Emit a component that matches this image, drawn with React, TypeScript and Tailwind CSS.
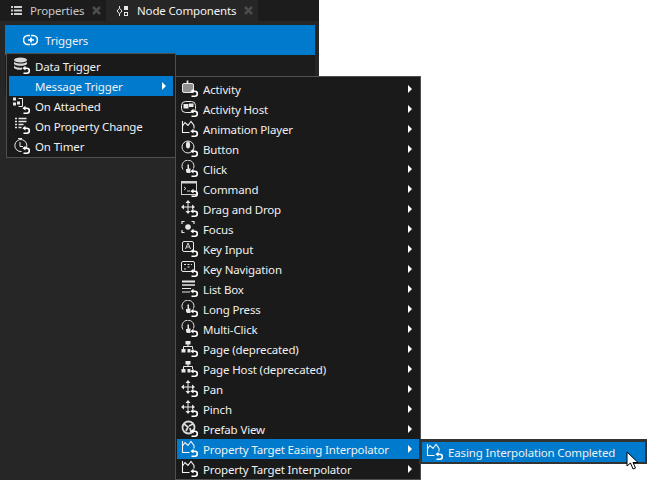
import React from 'react';

// every trigger icon has the same little return arrow in its lower right corner
const Arrow = () => (
  <g>
    <path d="M11.500 11.200h2.300a2.500 2.500 0 0 1 0 5h-3.300" fill="none" stroke="#fff" strokeWidth={1.600} />
    <path d="M12.500 8.800v4.800L9.400 11.200z" fill="#fff" />
  </g>
);

const glyphs: Record<string, React.ReactNode> = {
  data: (
    <g fill="#d8d8d8">
      <ellipse cx="7.500" cy="3" rx="6.500" ry="2.500" />
      <path d="M1 4.800c1 2.400 12 2.400 13 0v2.200c-1 2.400-12 2.400-13 0z" />
      <path d="M1 8.600c1 2.200 7 2.600 8 1.800v2.200c-2 .6-7 .2-8-1.800z" />
    </g>
  ),
  attached: (
    <g fill="none" stroke="#e8e8e8">
      <path d="M5.500 1.500h4v8h-4" />
      <rect x="0.500" y="1" width="2" height="2" fill="#e8e8e8" />
      <rect x="0.500" y="6" width="2" height="2" fill="#e8e8e8" />
      <rect x="4.500" y="5" width="2" height="2" fill="#e8e8e8" />
    </g>
  ),
  property: (
    <g stroke="#e8e8e8" strokeWidth={1.400} fill="none">
      <path d="M2 1.500h2M5.500 1.500h8M2 4.500h2M5.500 4.500h8M2 7.500h2M5.500 7.500h5M2 10.500h2M5.500 10.500h3" />
    </g>
  ),
  timer: (
    <g fill="none" stroke="#e8e8e8">
      <path d="M8.500 14.500a6 6 0 1 1 4.800-3.500" />
      <path d="M7 5v4.500h3M5 1.500h4M7 1.500v1.500" />
    </g>
  ),
  activity: (
    <g fill="none" stroke="#e8e8e8">
      <rect x="1.500" y="3.500" width="11" height="9" rx="1.500" fill="#8f8f8f" />
      <path d="M6.500 0.500v3" strokeWidth={1.800} />
    </g>
  ),
  host: (
    <g fill="none" stroke="#e8e8e8">
      <rect x="0.500" y="1.500" width="14" height="11" rx="4" />
      <rect x="3" y="4.500" width="4" height="3.500" fill="#e8e8e8" />
      <rect x="8.500" y="4" width="3.500" height="2.500" fill="#e8e8e8" />
    </g>
  ),
  animation: (
    <g fill="none" stroke="#f4f4f4" strokeWidth={1.100}>
      <path d="M1.500 1v11.500h7" />
      <path d="M1.500 6L4 2.500l3 3L10 1.500l3 4v3" />
    </g>
  ),
  button: (
    <g fill="none" stroke="#e8e8e8">
      <circle cx="7" cy="7" r="6" />
      <rect x="5.500" y="2" width="3" height="6" rx="1.500" fill="#e8e8e8" />
    </g>
  ),
  click: (
    <g fill="none" stroke="#e8e8e8">
      <path d="M2 9.500A6 6 0 1 1 12.500 8.500" />
      <path d="M5 9v2.500l1 1.500h3.500V8.500H8V4.500H6.500V9z" fill="#e8e8e8" stroke="none" />
    </g>
  ),
  command: (
    <g fill="none" stroke="#d0d0d0">
      <rect x="0.500" y="1.500" width="15" height="13" fill="#141414" />
      <path d="M0.500 2.500h15" strokeWidth={2} />
      <path d="M3 7l2 1.500L3 10M6 11h3" />
    </g>
  ),
  move: (
    <g fill="none" stroke="#e8e8e8">
      <path d="M7 1v12M1 7h12" />
      <path d="M7 0L4.500 3h5zM7 14l-2.500-3h5zM0 7l3-2.500v5zM14 7l-3-2.500v5z" fill="#e8e8e8" stroke="none" />
    </g>
  ),
  focus: (
    <g fill="none" stroke="#e8e8e8">
      <path d="M1 4V1.500h2.500M10.500 1.500H13V4M1 10v2.500h2.500" strokeWidth={1.200} />
      <circle cx="7" cy="7" r="2.800" fill="#e8e8e8" stroke="none" />
    </g>
  ),
  key: (
    <g fill="none" stroke="#e8e8e8">
      <rect x="1.500" y="1.500" width="11" height="10" rx="1.500" />
      <path d="M4.500 9l2.500-6 2.500 6M5.500 7h3" strokeWidth={0.900} />
    </g>
  ),
  nav: (
    <g fill="none" stroke="#e8e8e8">
      <rect x="0.500" y="1.500" width="13" height="10" rx="1.500" />
      <path d="M3 4.500h2M6.500 4.500h2M10 4.500h1M6.500 7h2M3 9h2" strokeWidth={1.200} />
    </g>
  ),
  list: (
    <g stroke="#e8e8e8" fill="none">
      <path d="M1 1.500h13" strokeWidth={2} />
      <path d="M1 5h13" strokeWidth={1.500} />
      <path d="M1 8.500h9M1 12h8" />
    </g>
  ),
  page: (
    <g fill="#e8e8e8" stroke="#e8e8e8">
      <rect x="5" y="1.500" width="4" height="2.500" />
      <path d="M7 4v3M2.500 9.500V6.500h9V9" fill="none" />
      <rect x="1" y="9.500" width="3" height="2.500" />
      <rect x="7" y="9.500" width="2" height="2.500" />
    </g>
  ),
  prefab: (
    <g fill="none" stroke="#d8d8d8" strokeWidth={1.800}>
      <circle cx="7.500" cy="7.500" r="6" />
      <path d="M3 4l4 3-2 4M12 4L8 6M10 12l-1-4" />
    </g>
  ),
};

const TriggerIcon = ({ name, className }: { name: string; className: string }) => (
  <svg className={className} width="18" height="18" viewBox="0 0 18 18" fill="none">
    {glyphs[name]}
    <Arrow />
  </svg>
);

const CloseX = () => (
  <svg width="9" height="9" viewBox="0 0 9 9" stroke="#4c4c4c" strokeWidth={2.500}>
    <path d="M1 1l7 7M8 1L1 8" />
  </svg>
);

const mainItems = [
  { icon: 'data', label: 'Data Trigger' },
  { icon: '', label: 'Message Trigger', active: true },
  { icon: 'attached', label: 'On Attached' },
  { icon: 'property', label: 'On Property Change' },
  { icon: 'timer', label: 'On Timer' },
];

const messageItems = [
  { icon: 'activity', label: 'Activity' },
  { icon: 'host', label: 'Activity Host' },
  { icon: 'animation', label: 'Animation Player' },
  { icon: 'button', label: 'Button' },
  { icon: 'click', label: 'Click' },
  { icon: 'command', label: 'Command' },
  { icon: 'move', label: 'Drag and Drop' },
  { icon: 'focus', label: 'Focus' },
  { icon: 'key', label: 'Key Input' },
  { icon: 'nav', label: 'Key Navigation' },
  { icon: 'list', label: 'List Box' },
  { icon: 'click', label: 'Long Press' },
  { icon: 'click', label: 'Multi-Click' },
  { icon: 'page', label: 'Page (deprecated)' },
  { icon: 'page', label: 'Page Host (deprecated)' },
  { icon: 'move', label: 'Pan' },
  { icon: 'move', label: 'Pinch' },
  { icon: 'prefab', label: 'Prefab View' },
  { icon: 'animation', label: 'Property Target Easing Interpolator', active: true },
  { icon: 'animation', label: 'Property Target Interpolator' },
];

const Caret = () => (
  <span className="ml-auto mr-[7px] -mt-[2px] h-0 w-0 border-y-[4px] border-l-[4px] border-y-transparent border-l-white" />
);

export default function App() {
  return (
    <div className="relative h-[480px] w-[648px] overflow-hidden bg-white font-['Noto_Sans',sans-serif] text-[11.5px] tracking-[-0.15px] text-[#f0f0f0]">
      <div className="flex h-full w-[319px] flex-col bg-[#262626]">
        <div className="flex h-[21px] bg-[#1c1c1c] text-[#c8c8c8]">
          <div className="flex w-[106px] items-center">
            <svg className="ml-[11px]" width="11" height="9" viewBox="0 0 11 9" fill="#d0d0d0">
              <path d="M0 0h2v2H0zM3 0h8v2H3zM0 3.500h2v2H0zM3 3.500h8v2H3zM0 7h2v2H0zM3 7h8v2H3z" />
            </svg>
            <span className="ml-[8px] w-[62px]">Properties</span>
            <CloseX />
          </div>
          <div className="flex w-[152px] items-center bg-[#262626] text-[#f4f4f4]">
            <svg className="ml-[10px]" width="13" height="12" viewBox="0 0 13 12" fill="none" stroke="#e8e8e8">
              <path d="M3.500 1v2M3.500 9v2" />
              <path d="M3.500 3.200L6 6l-2.500 2.800L1 6z" />
              <rect x="8.500" y="1.500" width="3" height="3" fill="#e8e8e8" />
              <rect x="8.500" y="7.500" width="3" height="3" />
            </svg>
            <span className="ml-[8px] w-[107px]">Node Components</span>
            <CloseX />
          </div>
        </div>
        <div className="ml-[5px] mr-[4px] mt-[4px] flex h-[30px] items-center bg-[#007acc] pl-[18px] pt-[2px]">
          <svg className="-mt-[2px]" width="15" height="12" viewBox="0 0 15 12" fill="none" stroke="#fff" strokeWidth={1.600}>
            <path d="M7 1.500H5a4.500 4.500 0 0 0 0 9h2" />
            <path d="M8 1.500h2a4.500 4.500 0 0 1 0 9H8" />
            <path d="M5 6h6M8 3.500v5" />
          </svg>
          <span className="ml-[7px]">Triggers</span>
        </div>
        <div className="ml-[5px] mr-[4px] h-[40px] bg-[#1c1c1c]" />
      </div>

      <div className="absolute left-[6px] top-[53px] w-[170px] border border-[#4f4f4f] bg-[#1a1a1a] px-[2px] pb-[1px] pt-[2px]">
        {mainItems.map((item) => (
          <div key={item.label} className={`flex h-[20px] items-center pl-[26px] pt-[2px] ${item.active ? 'bg-[#007acc]' : ''}`}>
            {item.icon && <TriggerIcon name={item.icon} className="absolute left-[6px] -mt-[2px]" />}
            <span>{item.label}</span>
            {item.active && <Caret />}
          </div>
        ))}
      </div>

      <div className="absolute left-[175px] top-[76px] w-[246px] border border-[#4f4f4f] bg-[#1a1a1a] px-[1px] pt-[2px]">
        {messageItems.map((item) => (
          <div key={item.label} className={`relative flex h-[20px] items-center pl-[26px] pt-[2px] ${item.active ? 'bg-[#007acc]' : ''}`}>
            <TriggerIcon name={item.icon} className="absolute left-[4px] top-[1px]" />
            <span>{item.label}</span>
            <Caret />
          </div>
        ))}
      </div>

      <div className="absolute left-[419px] top-[439px] w-[228px] border-[3px] border-b-2 border-r-2 border-[#333] bg-[#007acc]">
        <div className="relative flex h-[20px] items-center pl-[26px] pt-[2px]">
          <TriggerIcon name="animation" className="absolute left-[4px] top-[1px]" />
          <span>Easing Interpolation Completed</span>
        </div>
      </div>

      <svg className="absolute left-[626px] top-[451px]" width="14" height="20" viewBox="0 0 14 20">
        <path d="M1 1v14l3.500-3 2.500 6 2.500-1-2.500-5.500H12z" fill="#fff" stroke="#000" />
      </svg>
    </div>
  );
}
